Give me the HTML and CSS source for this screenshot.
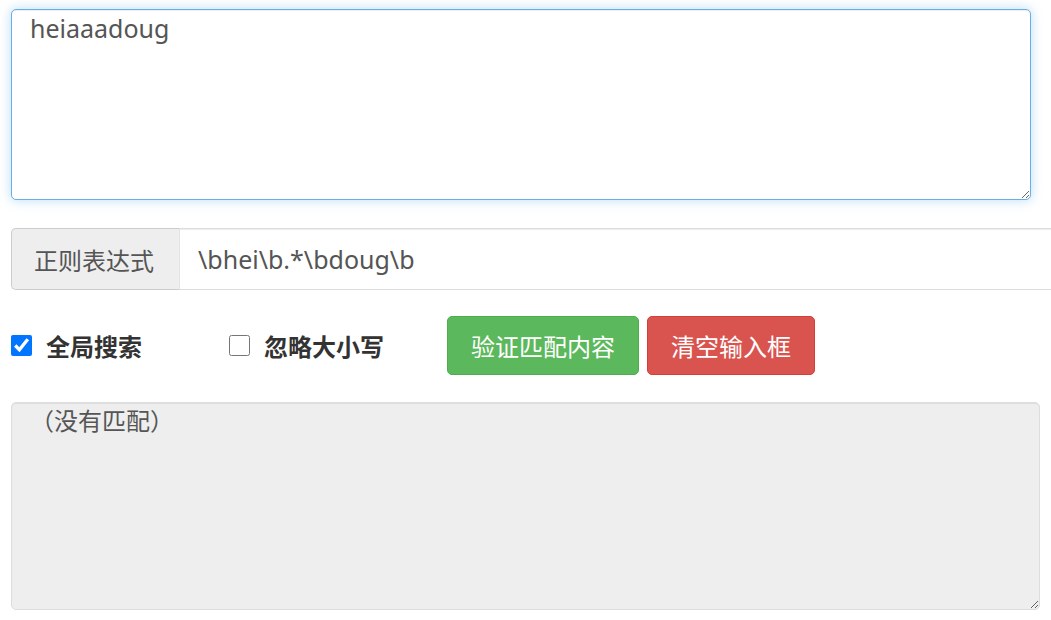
FILE: index.html
```html
<!DOCTYPE html>
<html lang="zh-CN">
<head>
  <meta charset="UTF-8">
  <title>正则表达式测试</title>
  <link rel="stylesheet" href="styles.css">
</head>
<body>
  <div class="tester">
    <textarea class="source" id="source" autofocus>heiaaadoug</textarea>

    <div class="input-group">
      <span class="addon">正则表达式</span>
      <input type="text" class="pattern" id="pattern" value="\bhei\b.*\bdoug\b">
    </div>

    <div class="options">
      <label class="opt opt-global"><input type="checkbox" id="global" checked> 全局搜索</label>
      <label class="opt opt-case"><input type="checkbox" id="ignoreCase"> 忽略大小写</label>
      <button class="btn btn-success" id="check">验证匹配内容</button>
      <button class="btn btn-danger" id="clear">清空输入框</button>
    </div>

    <textarea class="result" id="result" readonly>（没有匹配）</textarea>
  </div>

  <script>
    var src = document.getElementById("source");
    src.focus();
    src.setSelectionRange(src.value.length, src.value.length);
  </script>
</body>
</html>
```

FILE: styles.css
```css
* {
  box-sizing: border-box;
}
body {
  margin: 0;
  font-family: "Noto Sans", "Noto Sans CJK SC", sans-serif;
  color: #333;
  background: #fff;
  overflow: hidden;
}
.tester {
  padding: 9px 0 0 11px;
  width: 1080px;
}
textarea {
  display: block;
  font-family: "Noto Sans", "Noto Sans CJK SC", sans-serif;
  font-size: 25px;
  line-height: 1.3;
  color: #555;
  border-radius: 5px;
  resize: vertical;
}
.source {
  width: 1020px;
  height: 191px;
  padding: 2px 18px;
  border: 1px solid #66afe9;
  outline: none;
  box-shadow: inset 0 1px 1px rgba(0,0,0,.075), 0 0 12px rgba(102,175,233,.45);
}
.input-group {
  display: flex;
  margin-top: 28px;
  height: 62px;
  width: 1060px;
}
.addon {
  display: flex;
  align-items: center;
  padding: 0 0 0 22px;
  width: 168px;
  background: #eee;
  border: 1px solid #ccc;
  border-right: none;
  border-radius: 5px 0 0 5px;
  font-size: 24px;
  color: #555;
}
.pattern {
  flex: 1;
  border: 1px solid #ddd;
  border-left: 1px solid #e4e4e4;
  padding: 0 18px;
  font-family: "Noto Sans", "Noto Sans CJK SC", sans-serif;
  font-size: 25px;
  color: #555;
  outline: none;
  box-shadow: inset 0 1px 1px rgba(0,0,0,.075);
}
.options {
  display: flex;
  align-items: center;
  margin-top: 25px;
  height: 60px;
}
.opt {
  display: flex;
  align-items: center;
  font-size: 24px;
  font-weight: bold;
  color: #333;
}
.opt input {
  width: 21px;
  height: 21px;
  margin: 0 14px 0 0;
}
.opt-global {
  width: 218px;
}
.opt-case {
  width: 218px;
}
.btn {
  height: 59px;
  padding: 0 23px;
  border: 1px solid transparent;
  border-radius: 5px;
  font-family: "Noto Sans", "Noto Sans CJK SC", sans-serif;
  font-size: 24px;
  color: #fff;
  cursor: pointer;
}
.btn-success {
  background: #5cb85c;
  border-color: #4cae4c;
}
.btn-danger {
  margin-left: 8px;
  background: #d9534f;
  border-color: #d43f3a;
}
.result {
  margin-top: 27px;
  width: 1029px;
  height: 208px;
  padding: 2px 18px;
  font-size: 24px;
  background: #eee;
  border: 1px solid #ddd;
  outline: none;
  box-shadow: inset 0 1px 1px rgba(0,0,0,.075);
}
```
